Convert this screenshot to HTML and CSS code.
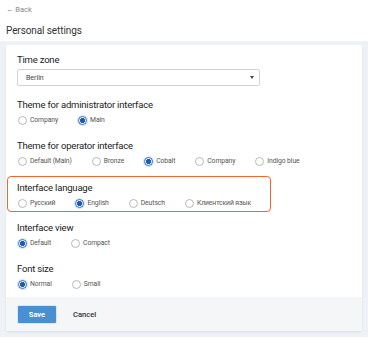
FILE: index.html
```html
<!DOCTYPE html>
<html lang="en">
  <head>
    <meta charset="UTF-8" />
    <title>Personal settings</title>
    <link rel="stylesheet" href="styles.css">
  </head>
  <body>
    <div class="page-header">
      <a class="back-link" href="#">&larr; Back</a>
      <h1 class="page-title">Personal settings</h1>
    </div>

    <div class="page-body">
      <form class="settings-card">
        <div class="settings-content">
          <div class="field">
            <div class="field-label">Time zone</div>
            <div class="select">
              <span>Berlin</span>
              <span class="select-arrow"></span>
            </div>
          </div>

          <div class="field">
            <div class="field-label">Theme for administrator interface</div>
            <div class="radio-group">
              <label class="radio"><span class="radio-mark"></span>Company</label>
              <label class="radio checked"><span class="radio-mark"></span>Main</label>
            </div>
          </div>

          <div class="field">
            <div class="field-label">Theme for operator interface</div>
            <div class="radio-group">
              <label class="radio"><span class="radio-mark"></span>Default (Main)</label>
              <label class="radio"><span class="radio-mark"></span>Bronze</label>
              <label class="radio checked"><span class="radio-mark"></span>Cobalt</label>
              <label class="radio"><span class="radio-mark"></span>Company</label>
              <label class="radio"><span class="radio-mark"></span>Indigo blue</label>
            </div>
          </div>

          <div class="field field-highlight">
            <div class="field-label">Interface language</div>
            <div class="radio-group">
              <label class="radio"><span class="radio-mark"></span>Русский</label>
              <label class="radio checked"><span class="radio-mark"></span>English</label>
              <label class="radio"><span class="radio-mark"></span>Deutsch</label>
              <label class="radio"><span class="radio-mark"></span>Клиентский язык</label>
            </div>
          </div>

          <div class="field">
            <div class="field-label">Interface view</div>
            <div class="radio-group">
              <label class="radio checked"><span class="radio-mark"></span>Default</label>
              <label class="radio"><span class="radio-mark"></span>Compact</label>
            </div>
          </div>

          <div class="field">
            <div class="field-label">Font size</div>
            <div class="radio-group">
              <label class="radio checked"><span class="radio-mark"></span>Normal</label>
              <label class="radio"><span class="radio-mark"></span>Small</label>
            </div>
          </div>
        </div>

        <div class="settings-footer">
          <button type="button" class="btn btn-primary">Save</button>
          <button type="button" class="btn btn-link">Cancel</button>
        </div>
      </form>
    </div>
  </body>
</html>
```

FILE: styles.css
```css
* {
  box-sizing: border-box;
  margin: 0;
  padding: 0;
}

body {
  font-family: Roboto, "Liberation Sans", sans-serif;
  color: #222;
  background-color: #eef1f6;
  min-height: 100vh;
}

.page-header {
  background-color: #fff;
  padding: 5px 6px 0;
  height: 41px;
}

.back-link {
  display: block;
  font-size: 7.5px;
  line-height: 10px;
  color: #8a8a8a;
  text-decoration: none;
}

.page-title {
  margin-top: 8px;
  font-size: 10px;
  font-weight: 400;
  letter-spacing: -0.1px;
  line-height: 15px;
  color: #333;
}

.page-body {
  padding: 4px 6px 8px;
}

.settings-card {
  background-color: #fff;
  border-radius: 2px;
  box-shadow: 0 1px 2px rgb(0 0 0 / 0.08);
  overflow: hidden;
}

.settings-content {
  padding: 8px 11px 7px;
}

.field + .field {
  margin-top: 13px;
}

.field-label {
  font-size: 9.5px;
  letter-spacing: -0.2px;
  line-height: 14px;
  color: #222;
}

.select {
  margin: 2px 0 -1px;
  width: 243px;
  height: 17px;
  display: flex;
  align-items: center;
  justify-content: space-between;
  padding: 0 5px 0 8px;
  border: 1px solid #d4d4d4;
  border-radius: 2px;
  font-size: 7px;
  color: #444;
}

.select-arrow {
  width: 0;
  height: 0;
  border-left: 2.5px solid transparent;
  border-right: 2.5px solid transparent;
  border-top: 3px solid #444;
}

.radio-group {
  display: flex;
  gap: 20px;
  margin-top: 2px;
  padding-left: 1px;
}

.radio {
  display: flex;
  align-items: center;
  gap: 3px;
  height: 12px;
  font-size: 6.8px;
  letter-spacing: -0.1px;
  color: #555;
}

.radio-mark {
  width: 9px;
  height: 9px;
  border: 1px solid #b9b9b9;
  border-radius: 50%;
  flex-shrink: 0;
}

.radio.checked .radio-mark {
  border-color: #2a6cc0;
  background: radial-gradient(circle, #1a5db5 0 2.3px, #fff 2.6px);
  box-shadow: 0 0 0 1px rgb(42 108 192 / 0.18);
}

/* highlighted block sticks out to the left of the other fields */
.field.field-highlight {
  width: max-content;
  margin: 9px 0 -3px -10px;
  padding: 4px 19px 2px 9px;
  border: 1.3px solid #f2652c;
  border-radius: 4px;
}

.field-highlight + .field {
  margin-top: 12px;
}

.settings-footer {
  display: flex;
  align-items: center;
  gap: 17px;
  padding: 9px 12px 8px;
  background-color: #f4f6f8;
}

.btn {
  font-family: inherit;
  border: 0;
  background: none;
  cursor: pointer;
}

.btn-primary {
  width: 38px;
  height: 17px;
  font-size: 7.5px;
  font-weight: 700;
  color: #fff;
  background-color: #4a8fd0;
  border-radius: 1px;
  box-shadow: 0 0 0 1px #d8e6f5;
}

.btn-link {
  font-size: 7.6px;
  font-weight: 500;
  color: #333;
}
```
